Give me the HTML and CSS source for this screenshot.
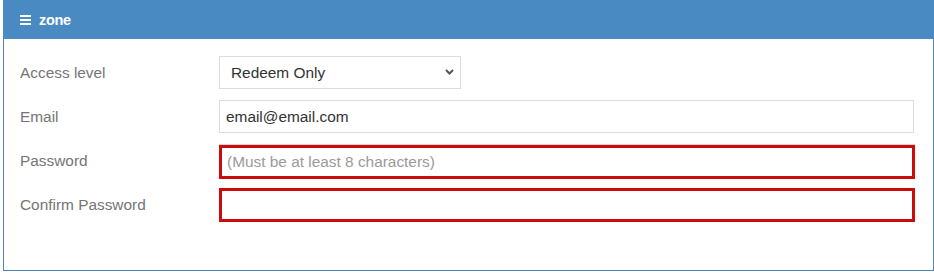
FILE: index.html
```html
<!DOCTYPE html>
<html>
<head>
<meta charset="utf-8">
<link rel="stylesheet" href="styles.css">
</head>
<body>
<div class="panel">
  <div class="panel-head">
    <svg class="menu-icon" width="11" height="10" viewBox="0 0 11 10"><rect x="0" y="0" width="11" height="2" fill="#fff"/><rect x="0" y="4" width="11" height="2" fill="#fff"/><rect x="0" y="8" width="11" height="2" fill="#fff"/></svg>
    <span class="title">zone</span>
  </div>
  <form class="form">
    <label class="label">Access level</label>
    <div class="select-wrap">
      <select class="control select"><option>Redeem Only</option></select>
      <svg class="chev" width="9" height="6" viewBox="0 0 9 6"><path d="M1 1 L4.5 4.5 L8 1" fill="none" stroke="#555" stroke-width="2"/></svg>
    </div>
    <label class="label">Email</label>
    <input class="control text" type="text" value="email@email.com">
    <label class="label">Password</label>
    <input class="control text invalid first-invalid" type="password" placeholder="(Must be at least 8 characters)">
    <label class="label">Confirm Password</label>
    <input class="control text invalid" type="password">
  </form>
</div>
</body>
</html>
```
FILE: styles.css
```css
html, body { margin: 0; padding: 0; background: #fff; }
body { font-family: "Liberation Sans", Arial, sans-serif; }
.panel {
  margin-left: 3px;
  width: 931px;
  height: 271px;
  box-sizing: border-box;
  border: 1px solid #4f86b8;
  border-top: none;
  background: #fff;
}
.panel-head {
  height: 39px;
  margin: 0 -1px;
  background: #4a8ac3;
  display: flex;
  align-items: center;
  padding-left: 17px;
  gap: 8px;
  color: #fff;
}
.menu-icon { display: block; margin-top: 1px; }
.title { font-weight: bold; font-size: 14.5px; letter-spacing: -0.3px; }
.form {
  display: grid;
  grid-template-columns: 198px 1fr;
  grid-auto-rows: 34px;
  row-gap: 10px;
  padding: 17px 19px 0 16px;
  align-items: center;
}
.label { font-size: 15.4px; color: #757575; }
.control {
  box-sizing: border-box;
  height: 33px;
  margin: 0;
  align-self: start;
  font-family: "Liberation Sans", Arial, sans-serif;
  font-size: 15.4px;
  color: #333;
  background: #fff;
  border: 1px solid #dcdcdc;
  outline: none;
  border-radius: 0;
}
.select-wrap { position: relative; width: 242px; height: 33px; margin-left: 1px; align-self: start; }
.select {
  appearance: none;
  -webkit-appearance: none;
  width: 242px;
  padding: 0 0 0 11px;
}
.chev { position: absolute; right: 7px; top: 13px; }
.text { width: calc(100% - 1px); margin-left: 1px; padding: 0 6px; }
.text::placeholder { color: #9a9a9a; }
.invalid {
  height: 34px;
  border: 3px solid #cc0c0c;
  padding: 0 5px;
  width: 100%;
}
.first-invalid {
  margin-top: 1px;
  box-shadow: 0 -1px 0 #d4d4d4;
}
```
